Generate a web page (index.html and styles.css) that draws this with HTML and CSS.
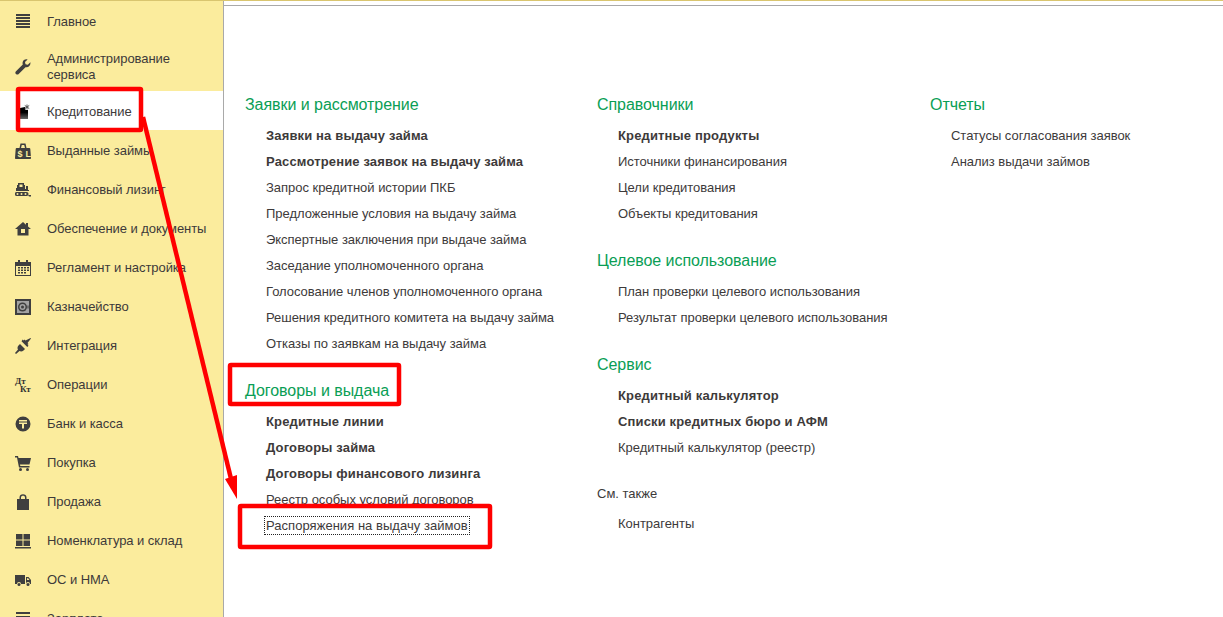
FILE: index.html
```html
<!DOCTYPE html>
<html>
<head>
  <meta charset="utf-8">
  <title>Кредитование</title>
  <link rel="stylesheet" href="styles.css">
</head>
<body>
  <div class="app">
    <div class="sidebar">
      <div class="nav-item">
        <svg class="nav-icon" viewBox="0 0 16 16"><path d="M1 0h14v2H1zM1 3h14v2H1zM1 6h14v2H1zM1 9h14v2H1zM1 12h14v2H1z"/></svg>
        <span>Главное</span>
      </div>
      <div class="nav-item nav-item-tall">
        <svg class="nav-icon" viewBox="0 0 16 16"><path d="M15.400 3.200l-2.600 2.500-2.300-.5-.5-2.300L12.600.4C10.500-.3 8 .9 7.600 3.400c-.1.7 0 1.400.2 2L1 12.200c-.9.900-.9 2 0 2.800.8.800 1.900.8 2.700 0l6.800-6.800c2.800.7 5.400-1.600 4.900-5z"/></svg>
        <span>Администрирование<br>сервиса</span>
      </div>
      <div class="nav-item active">
        <svg class="nav-icon" viewBox="0 0 16 16">
          <defs><linearGradient id="credit-fade" x1="0" y1="0" x2="0" y2="1"><stop offset="0.45" stop-color="#000"/><stop offset="1" stop-color="#666"/></linearGradient></defs>
          <path fill="url(#credit-fade)" d="M5 4l5-1 .5 3H13v9H5z"/>
          <path class="credit-spark" d="M12 .5v5M9.800 1.500l4.400 3M14.200 1.500l-4.400 3"/>
        </svg>
        <span>Кредитование</span>
      </div>
      <div class="nav-item">
        <svg class="nav-icon" viewBox="0 0 16 16">
          <path fill-rule="evenodd" d="M4.500 5l1-4.500h5l1 4.500h-1.500l-.8-3H6.800L6 5zM2 5h12c.8 0 1.200.4 1.300 1l.7 9c0 .6-.4 1-1 1H1c-.6 0-1-.4-1-1l.7-9C.8 5.400 1.200 5 2 5z"/>
          <text class="bag-text" x="2.500" y="14">$</text>
          <text class="bag-text" x="10.500" y="14">L</text>
        </svg>
        <span>Выданные займы</span>
      </div>
      <div class="nav-item">
        <svg class="nav-icon" viewBox="0 0 16 16"><path fill-rule="evenodd" d="M3 1h6v2h1v4h1V4h2v4h1v1H1V6h1V3h1zM4.500 2.500V5h3V2.500zM1.500 10h10c1.300 0 2 .9 2 2s-.7 2-2 2h-10c-1.300 0-1.500-.9-1.500-2s.2-2 1.500-2zM2.500 11a1 1 0 1 0 0 2 1 1 0 0 0 0-2zM6.500 11a1 1 0 1 0 0 2 1 1 0 0 0 0-2zM10.500 11a1 1 0 1 0 0 2 1 1 0 0 0 0-2zM13 13h3v1.500h-2z"/></svg>
        <span>Финансовый лизинг</span>
      </div>
      <div class="nav-item">
        <svg class="nav-icon" viewBox="0 0 16 16"><path fill-rule="evenodd" d="M8 1L0 8h2.500v6.500h11V8H16l-3-2.600V2h-2v1.700zM6 8h4v4H6z"/></svg>
        <span>Обеспечение и документы</span>
      </div>
      <div class="nav-item">
        <svg class="nav-icon" viewBox="0 0 16 16"><path fill-rule="evenodd" d="M3 0h2v2h6V0h2v2h3v14H0V2h3zM1 6v9h14V6zM3 7h2v1.500H3zM6 7h2v1.500H6zM9 7h2v1.500H9zM12 7h2v1.500h-2zM3 9.500h2V11H3zM6 9.500h2V11H6zM9 9.500h2V11H9zM12 9.500h2V11h-2zM3 12h2v1.500H3zM6 12h2v1.500H6zM9 12h2v1.500H9z"/></svg>
        <span>Регламент и настройка</span>
      </div>
      <div class="nav-item">
        <svg class="nav-icon" viewBox="0 0 16 16">
          <path d="M0 0h16v16H0z"/>
          <path class="safe-door" d="M2 2h12v12H2z"/>
          <circle cx="7.500" cy="8" r="4.500"/>
          <circle class="safe-door" cx="7.500" cy="8" r="3"/>
          <circle cx="7.500" cy="8" r="1.500"/>
          <path d="M12.500 6.500h1v3h-1z"/>
        </svg>
        <span>Казначейство</span>
      </div>
      <div class="nav-item">
        <svg class="nav-icon" viewBox="0 0 16 16"><path d="M15.500 0L16 .5l-3.500 4.500 1 1-1 .8 1 1-1.200 1.200-5.800-5.800L7.700 1.500l1 1 .8-1 1 1zM5 6l5 5-1.500 1.500c-1.300 1.200-3 1.200-4 .5L1 16l-1-1 3-3.500c-.7-1-.7-2.700.5-4z"/></svg>
        <span>Интеграция</span>
      </div>
      <div class="nav-item">
        <div class="nav-icon dt-kt"><span>Дт</span><span class="dt-kt-low">Кт</span></div>
        <span>Операции</span>
      </div>
      <div class="nav-item">
        <svg class="nav-icon" viewBox="0 0 16 16"><path fill-rule="evenodd" d="M8 .5a7.500 7.500 0 1 1 0 15 7.500 7.500 0 0 1 0-15zM4 4v1.500h8V4zM4 6.500V8h3v4.500h2V8h3V6.500z"/></svg>
        <span>Банк и касса</span>
      </div>
      <div class="nav-item">
        <svg class="nav-icon" viewBox="0 0 16 16"><path d="M0 1h3l.5 2H16l-1.500 6.500H5l.3 1.500h9.200v1.500H4L2 2.500H0z"/><circle cx="5.500" cy="14.500" r="1.500"/><circle cx="12.500" cy="14.500" r="1.500"/></svg>
        <span>Покупка</span>
      </div>
      <div class="nav-item">
        <svg class="nav-icon" viewBox="0 0 16 16"><path d="M2 5h2.500V3.500C4.500 1.500 6 .3 8 .3s3.500 1.200 3.500 3.200V5H14v11H2zM6 5h4V3.500C10 2.300 9.200 1.700 8 1.700s-2 .6-2 1.800z"/></svg>
        <span>Продажа</span>
      </div>
      <div class="nav-item">
        <svg class="nav-icon" viewBox="0 0 16 16"><path d="M1 1h6.500v5.500H1zM8.500 1H15v5.500H8.500zM1 7.500h6.500V13H1zM8.500 7.500H15V13H8.500zM0 14h16v1.500H0z"/></svg>
        <span>Номенклатура и склад</span>
      </div>
      <div class="nav-item">
        <svg class="nav-icon" viewBox="0 0 16 16"><path fill-rule="evenodd" d="M0 3h10v9H6a2 2 0 0 0-4 0H0zM11 5h2.500L16 8v4h-1a2 2 0 0 0-4 0zM12 6.300V8h2.500l-1.400-1.700z"/><circle cx="4" cy="12.500" r="1.500"/><circle cx="13" cy="12.500" r="1.500"/></svg>
        <span>ОС и НМА</span>
      </div>
      <div class="nav-item">
        <svg class="nav-icon" viewBox="0 0 16 16"><path d="M1 1h14v2H1zM1 5h14v2H1zM1 9h14v2H1zM1 13h14v2H1z"/></svg>
        <span>Зарплата</span>
      </div>
    </div>

    <div class="content">
      <div class="column column-first">
        <div class="group-title">Заявки и рассмотрение</div>
        <a class="link bold">Заявки на выдачу займа</a>
        <a class="link bold">Рассмотрение заявок на выдачу займа</a>
        <a class="link">Запрос кредитной истории ПКБ</a>
        <a class="link">Предложенные условия на выдачу займа</a>
        <a class="link">Экспертные заключения при выдаче займа</a>
        <a class="link">Заседание уполномоченного органа</a>
        <a class="link">Голосование членов уполномоченного органа</a>
        <a class="link">Решения кредитного комитета на выдачу займа</a>
        <a class="link">Отказы по заявкам на выдачу займа</a>
        <div class="group-title group-next">Договоры и выдача</div>
        <a class="link bold">Кредитные линии</a>
        <a class="link bold">Договоры займа</a>
        <a class="link bold">Договоры финансового лизинга</a>
        <a class="link">Реестр особых условий договоров</a>
        <a class="link"><span class="focused">Распоряжения на выдачу займов</span></a>
      </div>
      <div class="column column-second">
        <div class="group-title">Справочники</div>
        <a class="link bold">Кредитные продукты</a>
        <a class="link">Источники финансирования</a>
        <a class="link">Цели кредитования</a>
        <a class="link">Объекты кредитования</a>
        <div class="group-title group-next">Целевое использование</div>
        <a class="link">План проверки целевого использования</a>
        <a class="link">Результат проверки целевого использования</a>
        <div class="group-title group-next">Сервис</div>
        <a class="link bold">Кредитный калькулятор</a>
        <a class="link bold">Списки кредитных бюро и АФМ</a>
        <a class="link">Кредитный калькулятор (реестр)</a>
        <div class="see-also">См. также</div>
        <a class="link">Контрагенты</a>
      </div>
      <div class="column">
        <div class="group-title">Отчеты</div>
        <a class="link">Статусы согласования заявок</a>
        <a class="link">Анализ выдачи займов</a>
      </div>
    </div>

    <!-- red marks drawn on top of the screenshot -->
    <svg class="marks" viewBox="0 0 1223 617">
      <rect x="18" y="89" width="123" height="41" rx="1"/>
      <rect x="230" y="365" width="169" height="39" rx="1"/>
      <rect x="240" y="506" width="250" height="41" rx="1"/>
      <line x1="143" y1="117" x2="233" y2="487"/>
      <path class="mark-head" d="M225 479L237 475L237 499Z"/>
    </svg>
  </div>
</body>
</html>
```

FILE: styles.css
```css
html, body {
  margin: 0;
  padding: 0;
  background: white;
}

.app {
  position: relative;
  display: flex;
  width: 1223px;
  height: 617px;
  overflow: hidden;
  font-family: "Liberation Sans", Arial, sans-serif;
  font-size: 13px;
  color: #3d3a3a;
  border-top: 1px solid #d9c56f;
  box-sizing: border-box;
}

.sidebar {
  flex: none;
  width: 223px;
  background: #fbec9d;
  border-right: 1px solid #a9a9a9;
  letter-spacing: -0.06px;
}

.nav-item {
  display: flex;
  align-items: center;
  box-sizing: border-box;
  height: 39px;
  padding: 2px 0 0 15px;
}

.nav-item-tall {
  height: 51px;
  line-height: 16px;
}

.nav-item.active {
  background: white;
}

.nav-icon {
  flex: none;
  width: 16px;
  height: 16px;
  margin-right: 16px;
  fill: #3f3f3f;
}

.credit-spark {
  fill: none;
  stroke: #555;
  stroke-width: 1px;
}

.bag-text {
  font-size: 9px;
  font-weight: bold;
  fill: #fbec9d;
}

.safe-door {
  fill: #a3a3a3;
}

.dt-kt {
  font-family: "Liberation Serif", serif;
  font-size: 9px;
  font-weight: bold;
  line-height: 8px;
  color: #333;
  display: flex;
  flex-direction: column;
}

.dt-kt-low {
  margin-left: 5px;
}

.content {
  flex: 1;
  display: flex;
  border-top: 1px solid #a9a9a9;
  margin-top: 4px;
  padding: 86px 0 0 21px;
}

.column {
  display: flex;
  flex-direction: column;
  align-items: flex-start;
}

.column-first {
  width: 352px;
}

.column-second {
  width: 333px;
}

.group-title {
  height: 26px;
  line-height: 26px;
  margin-bottom: 5px;
  font-size: 16px;
  letter-spacing: -0.05px;
  color: #0a9e55;
}

.group-next {
  margin-top: 21px;
}

.link {
  display: block;
  height: 26px;
  line-height: 26px;
  margin-left: 21px;
  letter-spacing: -0.03px;
}

.bold {
  font-weight: bold;
  letter-spacing: 0.15px;
}

.focused {
  letter-spacing: 0.04px;
  outline: 1px dotted #222;
  outline-offset: 1px;
}

.see-also {
  height: 26px;
  line-height: 26px;
  margin-top: 20px;
  margin-bottom: 4px;
}

.marks {
  position: absolute;
  left: 0;
  top: -1px;
  width: 1223px;
  height: 617px;
  pointer-events: none;
}

.marks rect,
.marks line {
  fill: none;
  stroke: #f00;
  stroke-width: 4.5px;
}

.marks .mark-head {
  fill: #f00;
}
```
